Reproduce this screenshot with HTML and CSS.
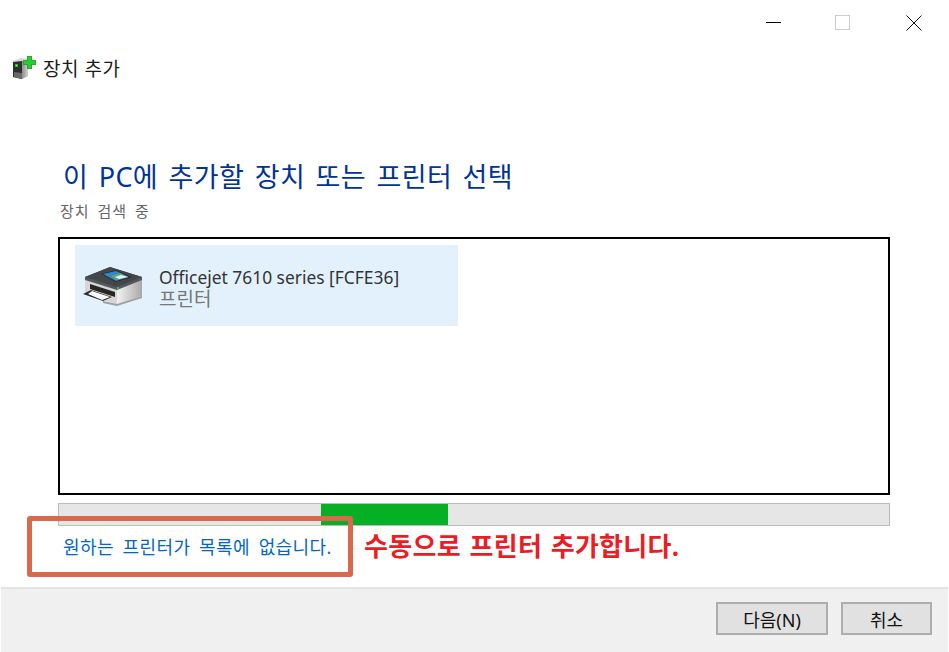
FILE: index.html
```html
<!DOCTYPE html>
<html lang="ko">
<head>
    <meta charset="UTF-8">
    <title>장치 추가</title>
    <link rel="stylesheet" href="styles.css">
</head>
<body>
    <div class="window">
        <div class="caption">
            <svg class="caption-icon" width="16" height="16" viewBox="0 0 16 16"><path d="M1 7.5H16" stroke="#000" fill="none"/></svg>
            <svg class="caption-icon" width="16" height="16" viewBox="0 0 16 16"><rect x="0.5" y="0.5" width="14" height="14" stroke="#ccc" fill="none"/></svg>
            <svg class="caption-icon" width="16" height="16" viewBox="0 0 16 16"><path d="M0.5 0.5L15.5 15.5M15.5 0.5L0.5 15.5" stroke="#111" fill="none"/></svg>
        </div>

        <div class="app-title">
            <svg class="app-icon" width="23" height="24" viewBox="0 0 23 24">
                <defs>
                    <linearGradient id="side" x1="0" y1="0" x2="1" y2="0">
                        <stop offset="0" stop-color="#8e8e8e"/>
                        <stop offset="1" stop-color="#d2d2d2"/>
                    </linearGradient>
                </defs>
                <path d="M0 5L8 2L15 3V20L9 23L0 21Z" fill="#d8d8d8"/>
                <path d="M0 6L9 5V23L0 21Z" fill="#2f2f2f"/>
                <path d="M9 5L15 4V20L9 23Z" fill="url(#side)"/>
                <path d="M1 16L9 17V23L1 21Z" fill="#6a6a6a"/>
                <rect x="2" y="8" width="3" height="3" fill="#17c917"/>
                <rect x="3" y="9" width="1" height="1" fill="#8dff8d"/>
                <path d="M14 0H19V4H23V9H19V13H14V9H10V4H14Z" fill="#2aa82a"/>
                <path d="M15 1H18V5H22V8H18V12H15V8H11V5H15Z" fill="#22cf35"/>
            </svg>
            <span>장치 추가</span>
        </div>

        <h1 class="heading">이 PC에 추가할 장치 또는 프린터 선택</h1>
        <div class="searching">장치 검색 중</div>

        <div class="device-list">
            <div class="device-item">
                <svg class="printer" width="64" height="42" viewBox="0 0 64 42">
                    <defs>
                        <linearGradient id="body" x1="0" y1="0" x2="1" y2="0">
                            <stop offset="0" stop-color="#f2f2f2"/>
                            <stop offset="1" stop-color="#a9a9a9"/>
                        </linearGradient>
                    </defs>
                    <path d="M4 14L36 24V39L22 35L4 29Z" fill="#d6d6d6"/>
                    <path d="M36 24L61 14V31L36 39Z" fill="url(#body)"/>
                    <path d="M4 12L29 2L61 12V15L36 25L4 15Z" fill="#55585b"/>
                    <path d="M4 12L29 2L61 12L36 22Z" fill="#44474a"/>
                    <path d="M20 9L35 5L51 12L35 17Z" fill="#2a2c2e"/>
                    <path d="M22 9L35 6L48 12L35 16Z" fill="#2f88c9"/>
                    <path d="M30 11L39 8L47 12L35 15Z" fill="#5fa876"/>
                    <path d="M34 12L40 10L47 12L38 14Z" fill="#e8eef2"/>
                    <rect x="36" y="22" width="2" height="2" fill="#35c24a"/>
                    <path d="M9 19L34 27V32L9 24Z" fill="#262626"/>
                    <path d="M2 29L10 25L31 32L22 36Z" fill="#2c2c2c"/>
                    <path d="M7 29L11 26L29 32L21 35Z" fill="#f8f8f8"/>
                    <path d="M22 36L36 39L61 31V33L36 41L22 38Z" fill="#a0a0a0"/>
                </svg>
                <div class="device-text">
                    <div class="device-name">Officejet 7610 series [FCFE36]</div>
                    <div class="device-type">프린터</div>
                </div>
            </div>
        </div>

        <div class="progress"><div class="progress-fill"></div></div>

        <div class="link-row">
            <a class="not-listed">원하는 프린터가 목록에 없습니다.</a>
            <span class="note">수동으로 프린터 추가합니다.</span>
        </div>

        <div class="callout"></div>

        <div class="footer">
            <button class="btn btn-next">다음(N)</button>
            <button class="btn btn-cancel">취소</button>
        </div>
    </div>
</body>
</html>
```

FILE: styles.css
```css
body {
    margin: 0;
    background: #fff;
    font-family: "Noto Sans", "Noto Sans CJK KR", sans-serif;
}
.window {
    position: relative;
    width: 949px;
    height: 652px;
    overflow: hidden;
    display: flex;
    flex-direction: column;
}
.caption {
    height: 15px;
    padding: 15px 27px 0 0;
    display: flex;
    justify-content: flex-end;
    gap: 54px;
}
.caption-icon:last-child {
    margin-left: 1px;
}
.app-title {
    display: flex;
    align-items: center;
    gap: 7px;
    height: 24px;
    margin-top: 26px;
    padding-left: 13px;
    font-size: 19px;
    letter-spacing: 0.5px;
    color: #1a1a1a;
}
.heading {
    margin: 78px 0 0 63px;
    font-size: 27px;
    line-height: 38px;
    font-weight: 400;
    color: #003399;
    letter-spacing: 0.4px;
    word-spacing: 3px;
}
.searching {
    margin: 5px 0 0 60px;
    font-size: 15px;
    line-height: 20px;
    color: #666;
    letter-spacing: 1px;
    word-spacing: 3px;
}
.device-list {
    box-sizing: border-box;
    width: 832px;
    height: 258px;
    margin: 16px 0 0 58px;
    border: 2px solid #000;
    padding: 6px 15px;
}
.device-item {
    display: flex;
    align-items: center;
    gap: 14px;
    width: 383px;
    height: 81px;
    box-sizing: border-box;
    padding-left: 6px;
    background: #e3f1fd;
}
.printer {
    flex: none;
}
.device-text {
    padding-top: 5px;
}
.device-name {
    font-size: 17.4px;
    line-height: 22px;
    color: #333;
}
.device-type {
    font-size: 19px;
    line-height: 22px;
    color: #777;
}
.progress {
    box-sizing: border-box;
    width: 832px;
    height: 23px;
    margin: 8px 0 0 58px;
    border: 1px solid #bcbcbc;
    background: #e6e6e6;
    padding-left: 262px;
}
.progress-fill {
    width: 127px;
    height: 100%;
    background: #06b025;
}
.link-row {
    display: flex;
    align-items: center;
    height: 40px;
    padding-left: 63px;
}
.not-listed {
    width: 300px;
    font-size: 18px;
    letter-spacing: 0.4px;
    word-spacing: 3.6px;
    color: #0066cc;
}
.note {
    margin: 0 0 2px 1px;
    font-size: 26px;
    font-weight: 700;
    letter-spacing: 0.3px;
    word-spacing: 1.5px;
    color: #ed1c24;
}
/* annotation drawn over the screenshot */
.callout {
    position: absolute;
    left: 27px;
    top: 516px;
    width: 316px;
    height: 51px;
    border: 5px solid #d9694a;
    border-radius: 3px;
}
.footer {
    flex: 1;
    display: flex;
    justify-content: flex-end;
    align-items: flex-start;
    gap: 13px;
    margin: 21px 1px 0 1px;
    border-top: 2px solid #e3e3e3;
    padding: 13px 16px 0 0;
    background: #f0f0f0;
}
.btn {
    box-sizing: border-box;
    height: 33px;
    padding: 0;
    border: 2px solid #adadad;
    background: #e1e1e1;
    font-family: inherit;
    font-size: 18px;
    color: #111;
}
.btn-next {
    width: 112px;
}
.btn-cancel {
    width: 91px;
}
```
